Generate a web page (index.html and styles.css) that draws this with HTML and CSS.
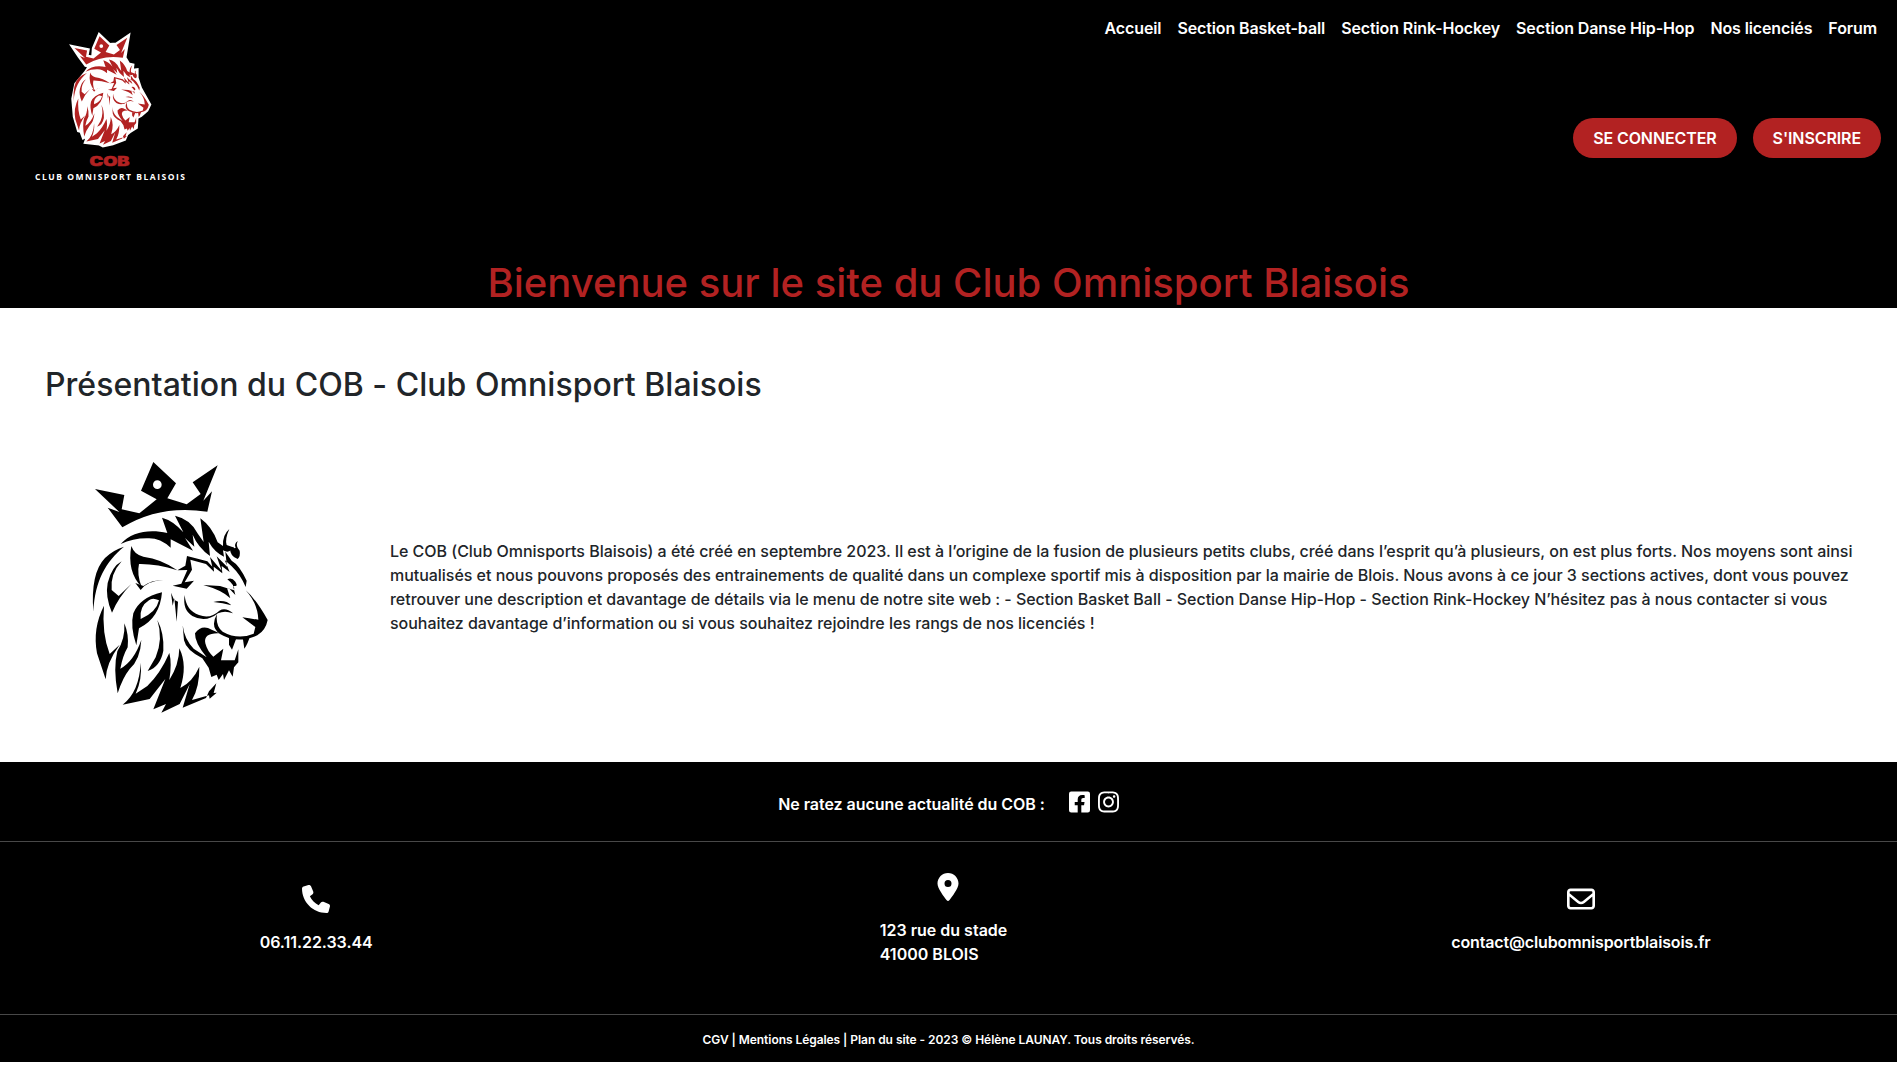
FILE: index.html
```html
<!DOCTYPE html>
<html lang="fr">
<head>
<meta charset="utf-8">
<title>Club Omnisport Blaisois</title>
<link rel="stylesheet" href="styles.css">
</head>
<body>
<header class="header">
  <div class="header-top">
    <svg class="logo" viewBox="0 0 220 220">
      <g transform="translate(68 31) scale(.1435 .1445)">
        <path class="mane" d="M45 117L133 135L125 178L178 190L183 122L220 36L288 100L338 97L413 46L390 185L420 235L445 240L440 280L475 275L475 325L500 400L562 510L545 545L505 580L475 595L470 665L430 690L405 710L390 745L310 775L245 788L220 775L130 765L150 710L110 730L95 690L78 685L50 590L40 470L60 370L127 290L160 240L127 232L83 173Z"/>
        <g id="lion" fill-rule="evenodd">
          <path d="M45 117L133 135L125 178L178 190L230 148L183 122L220 36L288 100L262 145L320 163L362 132L338 97L413 46L370 152L396 124L382 185Q240 163 127 232L83 173L118 186ZM245 104A13 13 0 1 0 219 104A13 13 0 1 0 245 104Z"/>
          <path d="M122 282C155 245 208 237 262 249L246 203Q280 212 310 247L285 197Q333 208 354 252L371 276L361 205Q396 230 413 277L429 288Q427 255 448 237Q434 268 440 285L459 292Q449 312 429 301L432 320Q403 306 386 275L390 318Q354 292 338 254L343 290L315 264L339 302L272 268V293Q240 264 205 265Q160 264 122 282Z"/>
          <path d="M473 273Q466 289 479 302Q482 318 473 327Q451 320 450 297L459 290Q463 297 467 293Q461 282 473 273Z"/>
          <path d="M154 288Q163 314 190 320Q245 327 292 361Q230 341 177 342Q170 372 185 411Q140 365 154 288Z"/>
          <path d="M132 290C78 335 45 390 40 485Q31 370 75 324Q99 300 132 290ZM125 334Q90 372 95 420L116 438L154 402Q115 442 96 488Q75 440 83 399Q95 350 125 334ZM250 390Q200 393 182 420L166 399L190 408Q213 390 250 390Z"/>
          <path d="M246 427Q179 443 160 490Q150 530 169 586L177 535Q240 504 246 427ZM237 451Q229 487 182 507Q178 469 207 451Q217 442 237 451Z"/>
          <path d="M72 467Q37 535 51 610L77 688Q78 640 119 584L89 612Q65 550 72 467ZM133 520Q136 566 112 604Q99 655 113 730Q128 683 149 657Q181 628 184 570Q161 635 121 656Q128 618 143 592Q147 553 133 520ZM232 510Q250 566 227 622L203 663Q241 650 250 602Q253 550 232 510Z"/>
          <path d="M182 638Q178 725 128 764L209 747L256 687L220 778L258 762L244 788L299 762L329 703L308 773L378 744L387 724L409 700L401 729L410 728L389 746L387 736L336 750Q359 710 358 650Q338 695 301 714Q323 646 298 595Q297 645 268 690Q276 640 268 609Q240 672 202 708L167 731Q187 688 182 638Z"/>
          <path d="M292 361L316 347L321 318L382 334L397 350L390 321L425 362L410 319L441 350L436 305L455 332Q478 345 500 392L497 411Q482 375 455 349L434 330L449 366L425 348L427 370L401 350L402 365L378 342L331 329L336 359L314 397L342 392L320 416L278 407L304 401L322 360Z"/>
          <path d="M370 405L420 408L449 417L466 435L459 407Q477 412 466 395Q455 381 442 388Q467 408 462 421L441 414L451 445Q428 421 370 405ZM273 428L278 467L283 445L290 515L294 455L282 449ZM314 435Q318 482 357 495Q391 508 418 482Q437 471 459 490Q434 480 414 490Q377 520 337 498Q307 480 314 435ZM400 456Q437 447 454 466Q429 459 400 456Z"/>
          <path d="M497 421Q527 446 563 510Q557 541 532 556Q472 583 420 552Q389 531 411 492Q406 529 428 545Q474 571 521 551L526 531L487 502Q510 506 535 509Q533 460 497 421Z"/>
          <path d="M308 526Q313 568 341 596L380 622Q344 579 345 550Q365 522 395 539L419 550Q369 548 376 580Q382 604 400 620L430 596L423 631L464 631L475 598V637L462 652L458 680L447 661L432 690L429 672L416 690L410 674L394 681L386 653L367 625Q318 600 312 571ZM447 562L469 565L456 599L447 584ZM488 562L510 558Q503 583 493 596Z"/>
        </g>
      </g>
      <text class="logo-name" x="89.5" y="166" textLength="40" lengthAdjust="spacingAndGlyphs">COB</text>
      <text class="logo-tag" x="35" y="179.5" textLength="150">CLUB OMNISPORT BLAISOIS</text>
    </svg>
    <div class="menus">
      <nav class="nav">
        <a>Accueil</a><a>Section Basket-ball</a><a>Section Rink-Hockey</a><a>Section Danse Hip-Hop</a><a>Nos licenciés</a><a>Forum</a>
      </nav>
      <div class="actions"><a class="btn">SE CONNECTER</a><a class="btn">S'INSCRIRE</a></div>
    </div>
  </div>
  <h1 class="title">Bienvenue sur le site du Club Omnisport Blaisois</h1>
</header>
<main class="main">
  <h2 class="subtitle">Présentation du COB - Club Omnisport Blaisois</h2>
  <div class="intro">
    <svg class="lion" viewBox="0 0 600 840"><use href="#lion"/></svg>
    <p class="text">Le COB (Club Omnisports Blaisois) a été créé en septembre 2023. Il est à l’origine de la fusion de plusieurs petits clubs, créé dans l’esprit qu’à plusieurs, on est plus forts. Nos moyens sont ainsi mutualisés et nous pouvons proposés des entrainements de qualité dans un complexe sportif mis à disposition par la mairie de Blois. Nous avons à ce jour 3 sections actives, dont vous pouvez retrouver une description et davantage de détails via le menu de notre site web : - Section Basket Ball - Section Danse Hip-Hop - Section Rink-Hockey N’hésitez pas à nous contacter si vous souhaitez davantage d’information ou si vous souhaitez rejoindre les rangs de nos licenciés !</p>
  </div>
</main>
<footer class="footer">
  <div class="social">
    <span>Ne ratez aucune actualité du COB :</span>
    <div class="social-icons">
      <svg viewBox="0 0 448 512"><path d="M400 32H48A48 48 0 0 0 0 80v352a48 48 0 0 0 48 48h137.25V327.69h-63V256h63v-54.64c0-62.15 37-96.48 93.67-96.48 27.14 0 55.52 4.84 55.52 4.84v61h-31.27c-30.81 0-40.42 19.12-40.42 38.73V256h68.78l-11 71.69h-57.78V480H400a48 48 0 0 0 48-48V80a48 48 0 0 0-48-48z"/></svg>
      <svg viewBox="0 0 448 512"><path d="M224.1 141c-63.6 0-114.9 51.3-114.9 114.9s51.3 114.9 114.9 114.9S339 319.5 339 255.9 287.7 141 224.1 141zm0 189.6c-41.1 0-74.7-33.5-74.7-74.7s33.5-74.7 74.7-74.7 74.7 33.5 74.7 74.7-33.6 74.7-74.7 74.7zm146.4-194.3c0 14.9-12 26.8-26.8 26.8-14.9 0-26.8-12-26.8-26.8s12-26.8 26.8-26.8 26.8 12 26.8 26.8zm76.1 27.2c-1.7-35.9-9.9-67.7-36.2-93.9-26.2-26.2-58-34.4-93.9-36.2-37-2.1-147.9-2.1-184.9 0-35.8 1.7-67.6 9.9-93.9 36.1s-34.4 58-36.2 93.9c-2.1 37-2.1 147.9 0 184.9 1.7 35.9 9.9 67.7 36.2 93.9s58 34.4 93.9 36.2c37 2.1 147.9 2.1 184.9 0 35.9-1.7 67.7-9.9 93.9-36.2 26.2-26.2 34.4-58 36.2-93.9 2.1-37 2.1-147.8 0-184.8zM398.8 388c-7.8 19.6-22.9 34.7-42.6 42.6-29.5 11.7-99.5 9-132.1 9s-102.7 2.6-132.1-9c-19.6-7.8-34.7-22.9-42.6-42.6-11.7-29.5-9-99.5-9-132.1s-2.6-102.7 9-132.1c7.8-19.6 22.9-34.7 42.6-42.6 29.5-11.7 99.5-9 132.1-9s102.7-2.6 132.1 9c19.6 7.8 34.7 22.9 42.6 42.6 11.7 29.5 9 99.5 9 132.1s2.7 102.7-9 132.1z"/></svg>
    </div>
  </div>
  <div class="contacts">
    <div class="contact">
      <svg class="icon" viewBox="0 0 512 512"><path d="M164.9 24.6c-7.7-18.6-28-28.5-47.4-23.2l-88 24C12.1 30.2 0 46 0 64C0 311.4 200.6 512 448 512c18 0 33.8-12.1 38.6-29.5l24-88c5.3-19.4-4.6-39.7-23.2-47.4l-96-40c-16.3-6.8-35.2-2.1-46.3 11.6L304.7 368C234.3 334.7 177.3 277.7 144 207.3L193.3 167c13.7-11.2 18.4-30 11.6-46.3l-40-96z"/></svg>
      <span>06.11.22.33.44</span>
    </div>
    <div class="contact">
      <svg class="icon" viewBox="-64 0 512 512"><path d="M215.7 499.2C267 435 384 279.4 384 192C384 86 298 0 192 0S0 86 0 192c0 87.4 117 243 168.3 307.2c12.3 15.3 35.1 15.3 47.4 0zM192 128a64 64 0 1 1 0 128 64 64 0 1 1 0-128z"/></svg>
      <span class="address">123 rue du stade<br>41000 BLOIS</span>
    </div>
    <div class="contact">
      <svg class="icon" viewBox="0 0 512 512"><path d="M64 112c-8.8 0-16 7.2-16 16v22.1L220.5 291.7c20.7 17 50.4 17 71.1 0L464 150.1V128c0-8.8-7.2-16-16-16H64zM48 212.2V384c0 8.8 7.2 16 16 16H448c8.8 0 16-7.2 16-16V212.2L322 328.8c-38.4 31.5-93.7 31.5-132 0L48 212.2zM0 128C0 92.7 28.7 64 64 64H448c35.3 0 64 28.7 64 64V384c0 35.3-28.7 64-64 64H64c-35.3 0-64-28.7-64-64V128z"/></svg>
      <span class="mail">contact@clubomnisportblaisois.fr</span>
    </div>
  </div>
  <div class="legal">CGV | Mentions Légales | Plan du site - 2023 © Hélène LAUNAY. Tous droits réservés.</div>
</footer>
</body>
</html>
```
FILE: styles.css
```css
* { box-sizing: border-box; }
body { margin: 0; background: #fff; color: #212529; font: 500 16px/24px Inter, "Liberation Sans", sans-serif; }
h1, h2, p { margin: 0; }

.header { height: 308px; background: #000; color: #fff; display: flex; flex-direction: column; justify-content: space-between; }
.header-top { display: flex; justify-content: space-between; }
.logo { width: 220px; height: 220px; fill: #b22222; }
.mane { fill: #fff; stroke: #fff; stroke-width: 34; }
.logo-name { font: 900 13px Inter, sans-serif; stroke: #b22222; stroke-width: .5; }
.logo-tag { font: 700 8.5px "Open Sans", sans-serif; fill: #fff; }
.menus { display: flex; flex-direction: column; align-items: flex-end; padding: 16px 16px 0 0; gap: 78px; }
.nav { display: flex; gap: 16px; padding-right: 4px; font-weight: 600; letter-spacing: -.11px; }
.actions { display: flex; gap: 16px; letter-spacing: -.1px; }
.btn { height: 40px; padding: 8px 20px; border-radius: 20px; background: #b22222; font-weight: 600; }
.title { color: #b22222; font-size: 40px; font-weight: 500; line-height: 48px; margin-bottom: 1px; text-align: center; }

.main { height: 454px; padding: 58px 43px 0 45px; }
.subtitle { font-size: 32px; font-weight: 500; line-height: 38px; letter-spacing: .03px; }
.intro { display: flex; align-items: center; margin-top: 46px; padding-left: 35px; }
.lion { flex: none; width: 200px; height: 280px; margin-right: 110px; }
.text { flex: 1; padding-bottom: 6px; letter-spacing: -.03px; }

.footer { height: 300px; background: #000; color: #fff; fill: #fff; font-weight: 600; }
.social { height: 80px; display: flex; justify-content: center; align-items: center; gap: 24px; padding-top: 5px; border-bottom: 1px solid #484848; letter-spacing: -.05px; }
.social-icons { display: flex; gap: 8px; padding-bottom: 5px; }
.social-icons svg { width: 21px; height: 24px; }
.contacts { height: 173px; display: grid; grid-template-columns: repeat(3, 1fr); align-items: center; border-bottom: 1px solid #484848; letter-spacing: -.05px; }
.contact { display: flex; flex-direction: column; align-items: center; gap: 17px; padding-bottom: 17px; }
.icon { width: 28px; height: 28px; }
.address { padding-right: 10px; letter-spacing: 0; }
.mail { letter-spacing: -.14px; }
.legal { padding-top: 13px; font-size: 12px; letter-spacing: -.055px; text-align: center; }
```
